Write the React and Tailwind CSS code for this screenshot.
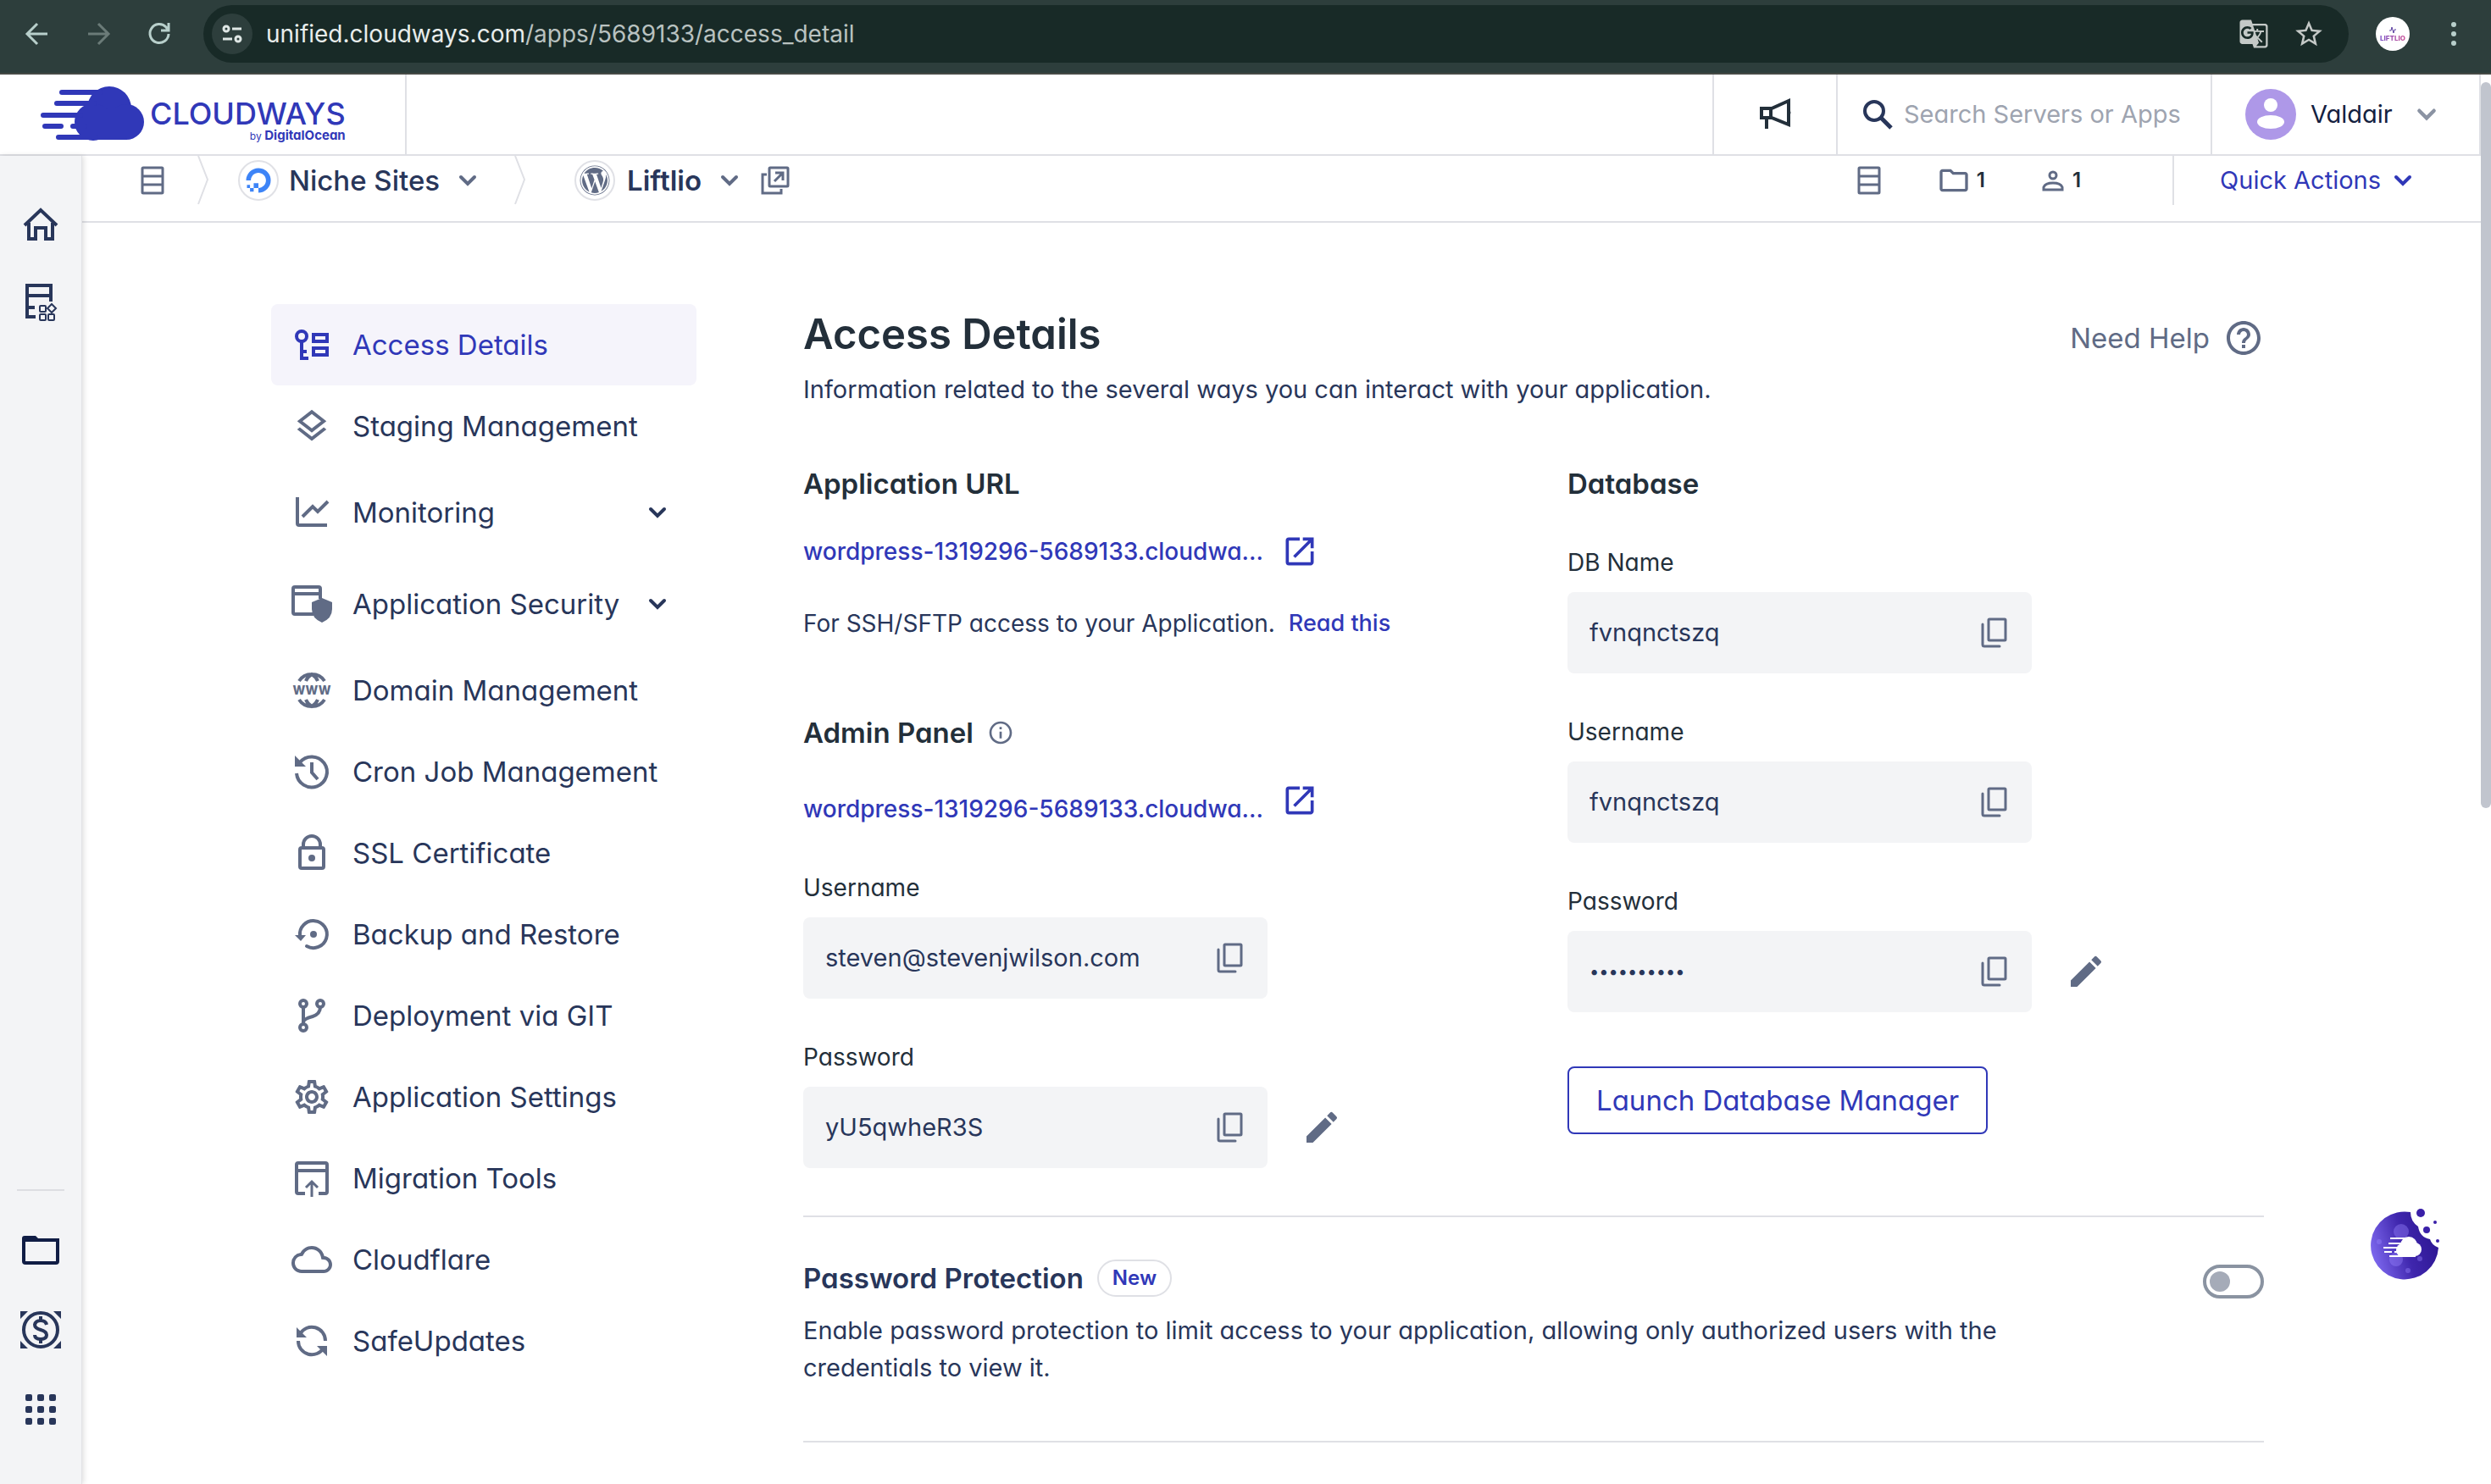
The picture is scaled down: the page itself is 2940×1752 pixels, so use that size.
import { useState } from "react";
import { FaWordpress, FaDigitalOcean } from "react-icons/fa";
import {
  MdOutlineLayers,
  MdOutlineSettings,
  MdOutlineCloud,
  MdOutlineFolder,
  MdStarBorder,
  MdGTranslate,
  MdHelpOutline,
  MdInfoOutline,
  MdOpenInNew,
  MdEdit,
} from "react-icons/md";

function Svg({ size = 48, box = 48, sw = 4, className = "", children }) {
  return (
    <svg
      width={size}
      height={size}
      viewBox={`0 0 ${box} ${box}`}
      fill="none"
      stroke="currentColor"
      strokeWidth={sw}
      className={`shrink-0 ${className}`}
      aria-hidden="true"
    >
      {children}
    </svg>
  );
}

function Chevron({ size = 24, className = "" }) {
  return (
    <Svg size={size} box={24} className={className}>
      <path d="M4 8l8 8 8-8" strokeLinecap="round" />
    </Svg>
  );
}

function StackIcon() {
  return (
    <Svg size={36} box={36} sw={3} className="text-[#606b85]">
      <rect x="6" y="3" width="24" height="30" rx="1" />
      <path d="M6 13h24M6 23h24" />
    </Svg>
  );
}

const KeyList = () => (
  <Svg>
    <circle cx="12" cy="14" r="6" />
    <path d="M12 20v20M10 40h10M12 32h6" />
    <rect x="26" y="12" width="16" height="8" />
    <rect x="26" y="28" width="16" height="8" />
  </Svg>
);
const ChartIcon = () => (
  <Svg>
    <path d="M7 6v31q0 2 2 2h33" />
    <path d="M13 29l12-12 6 6 12-12" />
  </Svg>
);
const SecurityIcon = () => (
  <Svg>
    <path d="M26 36H4q-2 0-2-2V6q0-2 2-2h28q2 0 2 2v12M2 12h32" />
    <path d="M36 17l12 5v8q0 11-12 16-12-5-12-16v-8z" fill="currentColor" stroke="none" />
  </Svg>
);
const WwwIcon = () => (
  <Svg sw={4}>
    <path d="M9 13q5-8 15-8t15 8M9 35q5 8 15 8t15-8M17 13q2-5 7-8 5 3 7 8M17 35q2 5 7 8 5-3 7-8" />
    <text
      x="24"
      y="29"
      textAnchor="middle"
      fontSize="14"
      fontWeight="800"
      fontFamily="Inter, sans-serif"
      fill="currentColor"
      stroke="none"
    >
      WWW
    </text>
  </Svg>
);
const HistoryIcon = () => (
  <Svg>
    <path d="M6 26a18 18 0 1 0 4-13" />
    <path d="M4 5l13 13H4z" fill="currentColor" stroke="none" />
    <path d="M24 13v12l7 8" />
  </Svg>
);
const LockIcon = () => (
  <Svg>
    <rect x="10" y="18" width="28" height="24" rx="2" />
    <path d="M14 18v-4a10 10 0 0 1 20 0v4" />
    <circle cx="24" cy="30" r="4" fill="currentColor" stroke="none" />
  </Svg>
);
const BackupIcon = () => (
  <Svg>
    <path d="M10 26a16 16 0 1 1 8 12" strokeLinecap="round" />
    <path d="M4 25h13l-6 7z" fill="currentColor" stroke="none" />
    <circle cx="26" cy="24" r="4" fill="currentColor" stroke="none" />
  </Svg>
);
const GitIcon = () => (
  <Svg>
    <circle cx="14" cy="10" r="4" />
    <circle cx="34" cy="10" r="4" />
    <circle cx="14" cy="38" r="4" />
    <path d="M14 14v20M34 14q0 8-9 11-11 3-11 7" />
  </Svg>
);
const MigrationIcon = () => (
  <Svg>
    <path d="M16 42H8q-2 0-2-2V8q0-2 2-2h32q2 0 2 2v32q0 2-2 2h-8M6 15h36" />
    <path d="M24 46V29M17 35l7-7 7 7" strokeWidth="3" />
  </Svg>
);
const UpdatesIcon = () => (
  <Svg>
    <path d="M10 16a16 16 0 0 1 30 8M8 24a16 16 0 0 0 30 8" />
    <path d="M6 8l12 12H6zM42 42L30 30h12z" fill="currentColor" stroke="none" />
  </Svg>
);

const menu = [
  { label: "Access Details", icon: <KeyList />, active: true },
  { label: "Staging Management", icon: <MdOutlineLayers size={46} /> },
  { label: "Monitoring", icon: <ChartIcon />, expand: true },
  { label: "Application Security", icon: <SecurityIcon />, expand: true },
  { label: "Domain Management", icon: <WwwIcon /> },
  { label: "Cron Job Management", icon: <HistoryIcon /> },
  { label: "SSL Certificate", icon: <LockIcon /> },
  { label: "Backup and Restore", icon: <BackupIcon /> },
  { label: "Deployment via GIT", icon: <GitIcon /> },
  { label: "Application Settings", icon: <MdOutlineSettings size={48} /> },
  { label: "Migration Tools", icon: <MigrationIcon /> },
  { label: "Cloudflare", icon: <MdOutlineCloud size={48} /> },
  { label: "SafeUpdates", icon: <UpdatesIcon /> },
];

function BrowserBar() {
  return (
    <div className="flex h-[88px] shrink-0 items-start border-b-2 border-[#464a45] bg-[#2d3e3c] pt-[6px] pr-[34px] pl-[20px]">
      <div className="flex h-[68px] items-center gap-[24px] text-[#b8cfcb]">
        <button aria-label="Back" className="flex">
          <Svg sw={3}>
            <path d="M36 24H13M24 12L12 24l12 12" />
          </Svg>
        </button>
        <button aria-label="Forward" className="flex text-[#6b7b78]">
          <Svg sw={3}>
            <path d="M12 24h23M24 12l12 12-12 12" />
          </Svg>
        </button>
        <button aria-label="Reload" className="flex">
          <Svg sw={3}>
            <path d="M35 24a11 11 0 1 1-3-8l3 4M35 11v9h-9" />
          </Svg>
        </button>
      </div>
      <div className="ml-[28px] flex h-[68px] flex-1 items-center rounded-full bg-[#182a27] px-[10px]">
        <button
          aria-label="Site information"
          className="flex size-[48px] items-center justify-center rounded-full bg-[#2d3e3c] text-[#dfe7e5]"
        >
          <Svg size={28} box={28} sw={3}>
            <circle cx="7" cy="8" r="3" />
            <path d="M14 8h11M3 20h11" />
            <circle cx="21" cy="20" r="3" />
          </Svg>
        </button>
        <p className="ml-[16px] flex-1 text-[28px] leading-[40px] text-[#b9c2c0]">
          <span className="text-[#e8edec]">unified.cloudways.com</span>/apps/5689133/access_detail
        </p>
        <div className="mr-[18px] flex items-center gap-[28px] text-[#c4c9c7]">
          <button aria-label="Translate" className="flex">
            <MdGTranslate size={36} />
          </button>
          <button aria-label="Bookmark" className="flex">
            <MdStarBorder size={38} />
          </button>
        </div>
      </div>
      <div className="flex h-[68px] items-center">
        <button
          aria-label="Profile"
          className="ml-[32px] flex size-[40px] flex-col items-center justify-center rounded-full bg-white"
        >
          <Svg size={10} box={10} sw={1} className="text-[#5b3fa0]">
            <path d="M1 6h2l1-4 2 7 1-4h2" />
          </Svg>
          <span className="bg-linear-to-r from-[#7a4fc4] to-[#c94a94] bg-clip-text text-[8px] leading-[10px] font-extrabold text-transparent">
            LIFTLIO
          </span>
        </button>
        <button aria-label="Menu" className="ml-[42px] flex text-[#b8cfcb]">
          <svg width="20" height="30" viewBox="0 0 20 30" fill="currentColor" aria-hidden="true">
            <circle cx="10" cy="4" r="3" />
            <circle cx="10" cy="15" r="3" />
            <circle cx="10" cy="26" r="3" />
          </svg>
        </button>
      </div>
    </div>
  );
}

function CloudMark({ className }) {
  return (
    <svg width="124" height="66" viewBox="0 0 124 66" className={className} fill="currentColor" aria-hidden="true">
      <circle cx="82" cy="27" r="26" />
      <circle cx="102" cy="43" r="21" />
      <circle cx="63" cy="43" r="22" />
      <rect x="60" y="30" width="42" height="34" />
      <rect x="23" y="5" width="52" height="6" rx="3" />
      <rect x="17" y="18" width="50" height="6" rx="3" />
      <rect x="1" y="32" width="50" height="6" rx="3" />
      <rect x="3" y="45" width="25" height="6" rx="3" />
      <rect x="36" y="45" width="20" height="6" rx="3" />
      <rect x="19" y="58" width="50" height="6" rx="3" />
    </svg>
  );
}

function Header() {
  return (
    <header className="flex h-[96px] shrink-0 border-r-2 border-b-2 border-[#dfe0e5] bg-white">
      <a
        href="#home"
        aria-label="Cloudways home"
        className="flex w-[480px] items-start border-r-2 border-[#dfe0e5] pt-[13px] pl-[47px] text-[#3038b8]"
      >
        <CloudMark />
        <span className="mt-[16px] ml-[6px] flex flex-col items-end">
          <span className="text-[36px] leading-[34px] font-medium">CLOUDWAYS</span>
          <span className="text-[15px] leading-[18px] font-bold">
            <span className="text-[12px] font-normal">by</span> DigitalOcean
          </span>
        </span>
      </a>
      <div className="flex-1" />
      <button
        aria-label="Announcements"
        className="flex w-[146px] items-center justify-center border-l-2 border-[#dfe0e5] text-[#232f3a]"
      >
        <Svg size={40} box={40}>
          <path d="M4 13h12L36 4v28L16 24H4zM15 13v11M10 24v13" />
          <path d="M37 15q3 3 0 6z" fill="currentColor" stroke="none" />
        </Svg>
      </button>
      <label className="flex w-[442px] items-center border-l-2 border-[#dfe0e5] pl-[28px] text-[#28365a]">
        <Svg size={38} box={38}>
          <circle cx="15" cy="15" r="11" />
          <path d="M23 23l12 12" strokeWidth="5" />
        </Svg>
        <input
          type="search"
          aria-label="Search Servers or Apps"
          placeholder="Search Servers or Apps"
          className="ml-[12px] w-[350px] bg-transparent text-[29px] leading-[42px] outline-none placeholder:text-[#9ea4b0]"
        />
      </label>
      <button className="flex w-[317px] items-center border-l-2 border-[#dfe0e5] pl-[39px] text-[29px] leading-[42px] text-[#14213f]">
        <svg width="60" height="60" viewBox="0 0 60 60" aria-hidden="true">
          <circle cx="30" cy="30" r="30" fill="#ae98e8" />
          <circle cx="30" cy="19" r="8" fill="#fff" />
          <ellipse cx="30" cy="39" rx="16" ry="8" fill="#fff" />
        </svg>
        <span className="mr-auto ml-[17px]">Valdair</span>
        <Chevron size={26} className="mr-[49px] text-[#8b93a3]" />
      </button>
    </header>
  );
}

function Rail() {
  return (
    <nav
      aria-label="Primary"
      className="z-10 flex w-[97px] shrink-0 flex-col items-center justify-between border-r border-[#e2e3e6] bg-[#f3f4f6] pt-[56px] pb-[64px] text-[#28365a] shadow-[2px_0_6px_rgba(0,0,0,0.12)]"
    >
      <div className="flex flex-col gap-[44px]">
        <a href="#dashboard" aria-label="Home">
          <Svg>
            <path d="M5 26L24 8l19 18M10 23v19h8V29h12v13h8V23" />
          </Svg>
        </a>
        <a href="#servers" aria-label="Servers and applications">
          <Svg>
            <path d="M36 24V5H8v37h10M8 17h28M8 31h9" />
            <g strokeWidth="2">
              <rect x="23" y="29" width="7" height="7" rx="1" />
              <rect x="23" y="39" width="7" height="7" rx="1" />
              <rect x="33" y="39" width="7" height="7" rx="1" />
              <path d="M37 27l5 5-5 5-5-5z" />
            </g>
          </Svg>
        </a>
      </div>
      <div className="flex flex-col items-center gap-[46px]">
        <hr className="w-[56px] border-t-2 border-[#dddee2]" />
        <a href="#projects" aria-label="Projects" className="text-[#101d45]">
          <Svg>
            <path d="M4 12h40v25q0 2-2 2H6q-2 0-2-2z" />
            <path d="M2 14V10q0-3 3-3h13l6 6z" fill="currentColor" stroke="none" />
          </Svg>
        </a>
        <a href="#billing" aria-label="Billing">
          <Svg>
            <circle cx="24" cy="24" r="20" />
            <path d="M31 18q-1-5-7-5t-7 5q0 4 7 6t7 6q0 5-7 5t-7-5M24 8v6M24 34v6" />
            <path d="M0 2h9L0 11zM48 2h-9l9 9zM0 46h9l-9-9zM48 46h-9l9-9z" fill="currentColor" stroke="none" />
          </Svg>
        </a>
        <a href="#more" aria-label="More">
          <svg width="48" height="48" viewBox="0 0 48 48" fill="currentColor" aria-hidden="true">
            {[6, 20, 34].map((y) =>
              [6, 20, 34].map((x) => <rect key={`${x}-${y}`} x={x} y={y} width="8" height="8" rx="2" />),
            )}
          </svg>
        </a>
      </div>
    </nav>
  );
}

function CrumbDivider() {
  return (
    <svg width="14" height="58" viewBox="0 0 14 58" fill="none" stroke="#dfe0e5" strokeWidth="2" aria-hidden="true">
      <path d="M1 0l11 28L1 57" />
    </svg>
  );
}

function Breadcrumb() {
  return (
    <div className="flex h-[79px] shrink-0 items-start border-b-2 border-[#dfe0e5] pr-[80px] pl-[65px] text-[#28365a]">
      <div className="flex h-[58px] items-center">
        <a href="#servers" aria-label="Servers">
          <StackIcon />
        </a>
        <div className="mr-[34px] ml-[35px]">
          <CrumbDivider />
        </div>
        <span className="flex size-[48px] items-center justify-center rounded-full border-2 border-[#e0e1e6]">
          <FaDigitalOcean size={30} className="text-[#3d84f7]" />
        </span>
        <button className="ml-[12px] flex items-center gap-[21px] text-[33px] leading-[48px] font-medium">
          Niche Sites
          <Chevron className="text-[#606b85]" />
        </button>
        <div className="mr-[57px] ml-[43px]">
          <CrumbDivider />
        </div>
        <span className="flex size-[48px] items-center justify-center rounded-full border-2 border-[#e0e1e6]">
          <FaWordpress size={36} className="text-[#606b85]" />
        </span>
        <button className="ml-[14px] flex items-center gap-[21px] text-[33px] leading-[48px] font-semibold">
          Liftlio
          <Chevron className="text-[#606b85]" />
        </button>
        <a href="#open" aria-label="Open application" className="ml-[24px] text-[#606b85]">
          <Svg size={36} box={36} sw={3}>
            <rect x="11" y="3" width="22" height="22" rx="1" />
            <path d="M8 11H3v22h22v-5M17 19l10-10M18 9h9v9" />
          </Svg>
        </a>
      </div>
      <div className="flex-1" />
      <div className="flex h-[58px] items-center text-[24px] font-semibold text-[#232f3a]">
        <StackIcon />
        <span className="ml-[62px] flex items-center gap-[7px]">
          <MdOutlineFolder size={40} className="text-[#606b85]" />1
        </span>
        <span className="ml-[66px] flex items-center gap-[9px]">
          <Svg size={28} box={28} sw={3} className="text-[#606b85]">
            <circle cx="14" cy="8" r="4" />
            <path d="M3 25v-3q2-5 11-5t11 5v3z" />
          </Svg>
          1
        </span>
      </div>
      <button className="ml-[108px] flex h-[58px] items-center gap-[14px] border-l-2 border-[#dfe0e5] pl-[54px] text-[29px] leading-[42px] text-[#3038b8]">
        Quick Actions
        <Chevron />
      </button>
    </div>
  );
}

function SideMenu() {
  return (
    <nav aria-label="Application" className="w-[502px] shrink-0">
      <ul>
        {menu.map((item) => (
          <li key={item.label}>
            <a
              href="#section"
              aria-current={item.active ? "page" : undefined}
              className={`flex items-center rounded-[8px] px-[24px] text-[33px] leading-[48px] ${
                item.expand ? "h-[108px]" : "h-[96px]"
              } ${item.active ? "bg-[#f5f4fb] text-[#3038b8]" : "text-[#28365a]"}`}
            >
              <span
                className={`flex size-[48px] items-center justify-center ${
                  item.active ? "text-[#3038b8]" : "text-[#606b85]"
                }`}
              >
                {item.icon}
              </span>
              <span className="ml-[24px] flex-1 whitespace-nowrap">{item.label}</span>
              {item.expand && <Chevron className="mr-[10px]" />}
            </a>
          </li>
        ))}
      </ul>
    </nav>
  );
}

function CopyIcon() {
  return (
    <Svg size={40} box={40} sw={3} className="text-[#606b85]">
      <rect x="13" y="4" width="20" height="25" rx="1" />
      <path d="M6 10v24q0 2 2 2h18" strokeLinecap="round" />
    </Svg>
  );
}

function Field({ id, label, value, type = "text", editable }) {
  return (
    <div className="flex flex-col gap-[14px]">
      <label htmlFor={id} className="text-[28px] leading-[42px] text-[#232f3a]">
        {label}
      </label>
      <div className="flex items-center gap-[40px]">
        <div className="flex h-[96px] w-[548px] items-center rounded-[8px] bg-[#f3f4f6] pr-[24px] pl-[26px]">
          <input
            id={id}
            type={type}
            readOnly
            defaultValue={value}
            className={`min-w-0 flex-1 bg-transparent leading-[42px] text-[#28365a] outline-none ${
              type === "password" ? "text-[20px]" : "text-[29px]"
            }`}
          />
          <button aria-label={`Copy ${label}`} className="flex">
            <CopyIcon />
          </button>
        </div>
        {editable && (
          <button aria-label={`Edit ${label}`} className="flex text-[#606b85]">
            <MdEdit size={48} />
          </button>
        )}
      </div>
    </div>
  );
}

function UrlLink({ className }) {
  return (
    <div className={`flex gap-[16px] ${className}`}>
      <a
        href="#app-url"
        className="w-[548px] self-end text-[28px] leading-[48px] font-medium whitespace-nowrap text-[#3038b8]"
      >
        wordpress-1319296-5689133.cloudwa...
      </a>
      <a href="#app-url" aria-label="Open in new tab" className="text-[#3038b8]">
        <MdOpenInNew size={44} />
      </a>
    </div>
  );
}

function Content() {
  const [enabled, setEnabled] = useState(false);
  return (
    <section className="min-w-0 flex-1">
      <div className="flex items-start justify-between">
        <h1 className="text-[49px] leading-[72px] font-semibold text-[#232f3a]">Access Details</h1>
        <a href="#help" className="mt-[16px] flex items-center gap-[16px] text-[33px] leading-[48px] text-[#606b85]">
          Need Help
          <MdHelpOutline size={48} />
        </a>
      </div>
      <p className="mt-[8px] text-[29px] leading-[42px] text-[#28365a]">
        Information related to the several ways you can interact with your application.
      </p>
      <div className="mt-[66px] grid grid-cols-2 gap-[80px]">
        <div>
          <h2 className="text-[33px] leading-[48px] font-semibold text-[#232f3a]">Application URL</h2>
          <UrlLink className="mt-[32px] h-[48px] items-center" />
          <p className="mt-[40px] flex gap-[16px] text-[28px] leading-[42px] text-[#28365a]">
            For SSH/SFTP access to your Application.
            <a href="#read" className="text-[27px] font-medium text-[#3038b8]">
              Read this
            </a>
          </p>
          <h2 className="mt-[84px] flex items-center gap-[16px] text-[33px] leading-[48px] font-semibold text-[#232f3a]">
            Admin Panel
            <MdInfoOutline size={32} className="text-[#606b85]" />
          </h2>
          <UrlLink className="mt-[34px] h-[56px] items-start" />
          <div className="mt-[48px] flex flex-col gap-[48px]">
            <Field id="admin-user" label="Username" value="steven@stevenjwilson.com" />
            <Field id="admin-pass" label="Password" value="yU5qwheR3S" editable />
          </div>
        </div>
        <div>
          <h2 className="text-[33px] leading-[48px] font-semibold text-[#232f3a]">Database</h2>
          <div className="mt-[48px] flex flex-col gap-[48px]">
            <Field id="db-name" label="DB Name" value="fvnqnctszq" />
            <Field id="db-user" label="Username" value="fvnqnctszq" />
            <Field id="db-pass" label="Password" type="password" value="0000000000" editable />
          </div>
          <button className="mt-[64px] h-[80px] rounded-[8px] border-2 border-[#3038b8] px-[32px] text-[33px] leading-[48px] text-[#3038b8]">
            Launch Database Manager
          </button>
        </div>
      </div>
      <div className="mt-[56px] flex items-start justify-between border-y-2 border-[#dfe0e5] pt-[48px] pb-[64px]">
        <div className="max-w-[1500px]">
          <div className="flex items-center gap-[16px]">
            <h2 id="protect" className="text-[33px] leading-[48px] font-semibold text-[#28365a]">
              Password Protection
            </h2>
            <span className="rounded-full border-2 border-[#dfe0e5] px-[16px] text-[24px] leading-[40px] font-semibold text-[#3038b8]">
              New
            </span>
          </div>
          <p className="mt-[16px] text-[29px] leading-[44px] text-[#28365a]">
            Enable password protection to limit access to your application, allowing only authorized users with the
            credentials to view it.
          </p>
        </div>
        <input
          type="checkbox"
          role="switch"
          aria-labelledby="protect"
          checked={enabled}
          onChange={(e) => setEnabled(e.target.checked)}
          className="mt-[8px] flex h-[40px] w-[72px] appearance-none items-center rounded-full border-4 border-[#8a93a1] bg-white px-[4px] before:size-[24px] before:rounded-full before:bg-[#a5abb8] before:content-[''] checked:justify-end"
        />
      </div>
    </section>
  );
}

function CookieButton() {
  return (
    <button aria-label="Cookie preferences" className="absolute right-[58px] bottom-[240px]">
      <svg width="84" height="86" viewBox="0 0 84 86" aria-hidden="true">
        <defs>
          <linearGradient id="cookie" x1="0" y1="0.6" x2="1" y2="0.3">
            <stop offset="0" stopColor="#7d68ee" />
            <stop offset="0.5" stopColor="#3f26ad" />
            <stop offset="1" stopColor="#2b1590" />
          </linearGradient>
        </defs>
        <path
          d="M47 5A40 40 0 1 0 80 47q-8-3-10-10-12-2-14-15-9-6-9-17z"
          fill="url(#cookie)"
        />
        <g fill="#3a20a8">
          <circle cx="59" cy="6" r="5" />
          <circle cx="66" cy="26" r="4" />
          <circle cx="76" cy="17" r="2" />
          <circle cx="79" cy="39" r="2" />
        </g>
        <g fill="#9a86ff" opacity="0.4">
          <circle cx="36" cy="28" r="9" />
          <circle cx="30" cy="61" r="8" />
          <circle cx="58" cy="60" r="3" />
          <circle cx="44" cy="74" r="3" />
          <circle cx="10" cy="40" r="3" />
        </g>
        <g fill="#fff">
          <circle cx="45" cy="44" r="10" />
          <circle cx="52" cy="49" r="8" />
          <circle cx="38" cy="50" r="8" />
          <rect x="37" y="46" width="16" height="12" />
          <rect x="23" y="35" width="18" height="2" />
          <rect x="21" y="41" width="18" height="2" />
          <rect x="15" y="46" width="18" height="2" />
          <rect x="16" y="51" width="9" height="2" />
          <rect x="28" y="51" width="8" height="2" />
          <rect x="22" y="56" width="18" height="2" />
        </g>
      </svg>
    </button>
  );
}

export default function App() {
  return (
    <div className="relative flex h-screen flex-col overflow-hidden bg-white font-['Inter',sans-serif]">
      <BrowserBar />
      <div className="flex min-h-0 flex-1 [font-feature-settings:'cv11']">
        <div className="flex min-w-0 flex-1 flex-col">
          <Header />
          <div className="flex min-h-0 flex-1">
            <Rail />
            <main className="flex min-w-0 flex-1 flex-col">
              <Breadcrumb />
              <div className="flex gap-[126px] pt-[96px] pr-[256px] pl-[223px]">
                <SideMenu />
                <Content />
              </div>
            </main>
          </div>
        </div>
        <div className="w-[12px] shrink-0 pt-[9px]">
          <div className="h-[857px] rounded-full bg-[#c1c5ce]" />
        </div>
      </div>
      <CookieButton />
    </div>
  );
}
